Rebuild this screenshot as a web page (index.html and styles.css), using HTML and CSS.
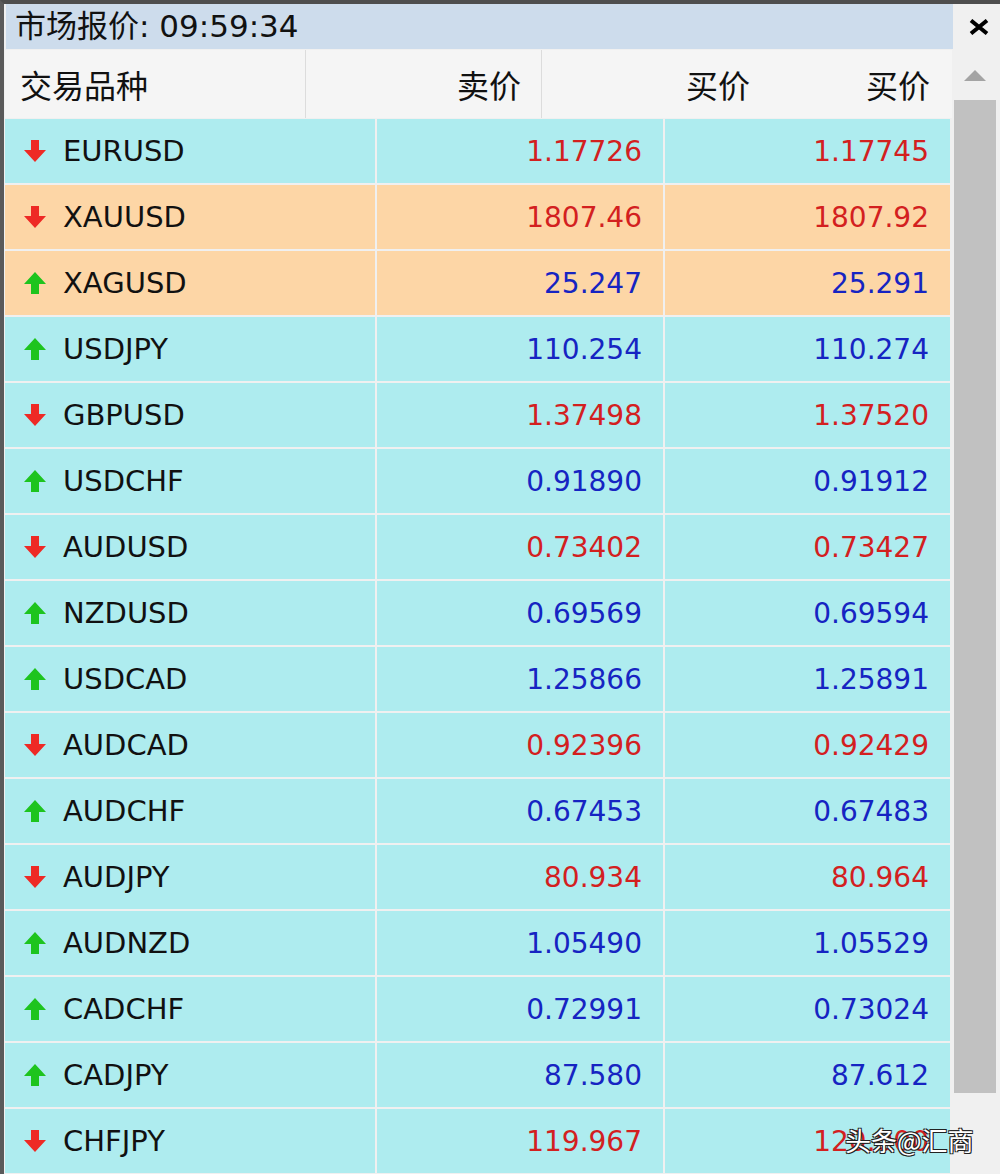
FILE: index.html
```html
<!DOCTYPE html>
<html lang="zh-CN">
<head>
  <meta charset="UTF-8" />
  <title>市场报价</title>
  <link rel="stylesheet" href="styles.css">
</head>
<body>
  <div class="window">
    <div class="main">
      <!-- Title -->
      <div class="title">市场报价: 09:59:34</div>

      <!-- Column header -->
      <div class="head">
        <div class="head-cell">交易品种</div>
        <div class="head-cell right">卖价</div>
        <div class="head-cell right pair">
          <span>买价</span>
          <span>买价</span>
        </div>
      </div>

      <!-- Quotes -->
      <div class="quotes">
        <div class="row">
          <div class="sym"><svg class="arrow down" viewBox="0 0 22 22"><polygon points="7,0 15,0 15,10 22,10 11,22 0,10 7,10"/></svg>EURUSD</div>
          <div class="price red">1.17726</div>
          <div class="price red">1.17745</div>
        </div>
        <div class="row hot">
          <div class="sym"><svg class="arrow down" viewBox="0 0 22 22"><polygon points="7,0 15,0 15,10 22,10 11,22 0,10 7,10"/></svg>XAUUSD</div>
          <div class="price red">1807.46</div>
          <div class="price red">1807.92</div>
        </div>
        <div class="row hot">
          <div class="sym"><svg class="arrow up" viewBox="0 0 22 22"><polygon points="11,0 22,12 15,12 15,22 7,22 7,12 0,12"/></svg>XAGUSD</div>
          <div class="price blue">25.247</div>
          <div class="price blue">25.291</div>
        </div>
        <div class="row">
          <div class="sym"><svg class="arrow up" viewBox="0 0 22 22"><polygon points="11,0 22,12 15,12 15,22 7,22 7,12 0,12"/></svg>USDJPY</div>
          <div class="price blue">110.254</div>
          <div class="price blue">110.274</div>
        </div>
        <div class="row">
          <div class="sym"><svg class="arrow down" viewBox="0 0 22 22"><polygon points="7,0 15,0 15,10 22,10 11,22 0,10 7,10"/></svg>GBPUSD</div>
          <div class="price red">1.37498</div>
          <div class="price red">1.37520</div>
        </div>
        <div class="row">
          <div class="sym"><svg class="arrow up" viewBox="0 0 22 22"><polygon points="11,0 22,12 15,12 15,22 7,22 7,12 0,12"/></svg>USDCHF</div>
          <div class="price blue">0.91890</div>
          <div class="price blue">0.91912</div>
        </div>
        <div class="row">
          <div class="sym"><svg class="arrow down" viewBox="0 0 22 22"><polygon points="7,0 15,0 15,10 22,10 11,22 0,10 7,10"/></svg>AUDUSD</div>
          <div class="price red">0.73402</div>
          <div class="price red">0.73427</div>
        </div>
        <div class="row">
          <div class="sym"><svg class="arrow up" viewBox="0 0 22 22"><polygon points="11,0 22,12 15,12 15,22 7,22 7,12 0,12"/></svg>NZDUSD</div>
          <div class="price blue">0.69569</div>
          <div class="price blue">0.69594</div>
        </div>
        <div class="row">
          <div class="sym"><svg class="arrow up" viewBox="0 0 22 22"><polygon points="11,0 22,12 15,12 15,22 7,22 7,12 0,12"/></svg>USDCAD</div>
          <div class="price blue">1.25866</div>
          <div class="price blue">1.25891</div>
        </div>
        <div class="row">
          <div class="sym"><svg class="arrow down" viewBox="0 0 22 22"><polygon points="7,0 15,0 15,10 22,10 11,22 0,10 7,10"/></svg>AUDCAD</div>
          <div class="price red">0.92396</div>
          <div class="price red">0.92429</div>
        </div>
        <div class="row">
          <div class="sym"><svg class="arrow up" viewBox="0 0 22 22"><polygon points="11,0 22,12 15,12 15,22 7,22 7,12 0,12"/></svg>AUDCHF</div>
          <div class="price blue">0.67453</div>
          <div class="price blue">0.67483</div>
        </div>
        <div class="row">
          <div class="sym"><svg class="arrow down" viewBox="0 0 22 22"><polygon points="7,0 15,0 15,10 22,10 11,22 0,10 7,10"/></svg>AUDJPY</div>
          <div class="price red">80.934</div>
          <div class="price red">80.964</div>
        </div>
        <div class="row">
          <div class="sym"><svg class="arrow up" viewBox="0 0 22 22"><polygon points="11,0 22,12 15,12 15,22 7,22 7,12 0,12"/></svg>AUDNZD</div>
          <div class="price blue">1.05490</div>
          <div class="price blue">1.05529</div>
        </div>
        <div class="row">
          <div class="sym"><svg class="arrow up" viewBox="0 0 22 22"><polygon points="11,0 22,12 15,12 15,22 7,22 7,12 0,12"/></svg>CADCHF</div>
          <div class="price blue">0.72991</div>
          <div class="price blue">0.73024</div>
        </div>
        <div class="row">
          <div class="sym"><svg class="arrow up" viewBox="0 0 22 22"><polygon points="11,0 22,12 15,12 15,22 7,22 7,12 0,12"/></svg>CADJPY</div>
          <div class="price blue">87.580</div>
          <div class="price blue">87.612</div>
        </div>
        <div class="row">
          <div class="sym"><svg class="arrow down" viewBox="0 0 22 22"><polygon points="7,0 15,0 15,10 22,10 11,22 0,10 7,10"/></svg>CHFJPY</div>
          <div class="price red">119.967</div>
          <div class="price red">120.000</div>
        </div>
      </div>
    </div>

    <!-- Close button + scrollbar -->
    <div class="side">
      <div class="close">
        <svg viewBox="0 0 22 16" width="22" height="16"><path d="M3 1.5 L19 14.5 M19 1.5 L3 14.5" /></svg>
      </div>
      <div class="scroll-up"><span class="tri"></span></div>
      <div class="thumb"></div>
    </div>
  </div>

  <div class="watermark">头条@汇商</div>
</body>
</html>
```

FILE: styles.css
```css
* {
  box-sizing: border-box;
}

body {
  margin: 0;
  height: 1174px;
  overflow: hidden;
  background: #f0f0f0;
  font-family: 'DejaVu Sans', 'Noto Sans CJK SC', sans-serif;
  color: #111;
}

.window {
  display: flex;
  height: 1174px;
  border-top: 4px solid #4e4e4e;
  border-left: 4px solid #5a5a5a;
}

.main {
  width: 949px;
  padding-left: 1px;
  display: flex;
  flex-direction: column;
  gap: 1px;
}

/* Title bar */
.title {
  height: 45px;
  margin-left: 1px;
  padding-left: 9px;
  background: #cddcec;
  font-size: 31px;
  line-height: 45px;
  white-space: nowrap;
}

/* Header */
.head {
  height: 68px;
  display: grid;
  grid-template-columns: 301px 236px 1fr;
  background: #f5f5f5;
  margin-right: 1px;
}

.head-cell {
  display: flex;
  align-items: center;
  padding: 0 15px;
  font-size: 32px;
  border-right: 1px solid #dcdcdc;
}

.head-cell.right {
  justify-content: flex-end;
  padding-right: 20px;
}

.head-cell.pair {
  border-right: none;
  gap: 116px;
  padding-right: 22px;
}

/* Quote rows */
.quotes {
  display: flex;
  flex-direction: column;
  gap: 2px;
  width: 945px;
}

.row {
  height: 64px;
  display: grid;
  grid-template-columns: 370px 286px 285px;
  gap: 2px;
}

.row > div {
  background: #aeecef;
  display: flex;
  align-items: center;
}

.row.hot > div {
  background: #fdd6a6;
}

.sym {
  padding-left: 19px;
  font-size: 29px;
  gap: 17px;
}

.price {
  justify-content: flex-end;
  padding-right: 21px;
  font-size: 28px;
}

.price.red {
  color: #d3201f;
}

.price.blue {
  color: #1624c2;
}

.arrow {
  width: 22px;
  height: 22px;
  flex-shrink: 0;
}

.arrow.down {
  fill: #ee2a25;
}

.arrow.up {
  fill: #1ec41e;
}

/* Side column */
.side {
  width: 47px;
  display: flex;
  flex-direction: column;
}

.close {
  height: 46px;
  display: flex;
  align-items: center;
  justify-content: center;
  padding-left: 4px;
}

.close path {
  stroke: #000;
  stroke-width: 4;
  fill: none;
}

.scroll-up {
  height: 50px;
  display: flex;
  align-items: center;
  justify-content: center;
  padding-right: 3px;
}

.tri {
  width: 0;
  height: 0;
  border-left: 11px solid transparent;
  border-right: 11px solid transparent;
  border-bottom: 11px solid #a4a4a4;
}

.thumb {
  height: 993px;
  margin: 0 4px 0 1px;
  background: #c1c1c1;
}

.watermark {
  position: absolute;
  left: 845px;
  top: 1121px;
  font-family: 'Noto Sans CJK SC', sans-serif;
  font-size: 26px;
  color: #fff;
  text-shadow: 1px 1px 0 #222, -1px -1px 0 #222, 1px -1px 0 #222, -1px 1px 0 #222;
}
```
